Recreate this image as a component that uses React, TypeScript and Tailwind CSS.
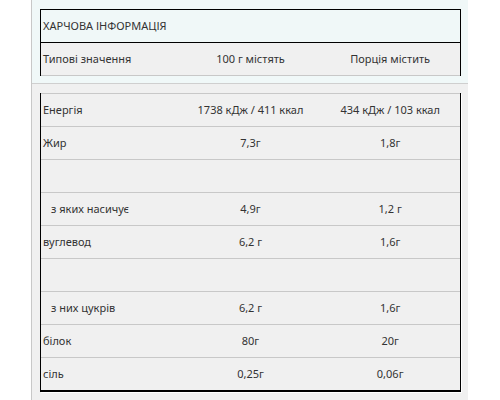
const rows = [
  { name: 'Енергія', per100: '1738 кДж / 411 ккал', portion: '434 кДж / 103 ккал' },
  { name: 'Жир', per100: '7,3г', portion: '1,8г' },
  { name: '', per100: '', portion: '' },
  { name: 'з яких насичує', per100: '4,9г', portion: '1,2 г', indent: true },
  { name: 'вуглевод', per100: '6,2 г', portion: '1,6г' },
  { name: '', per100: '', portion: '' },
  { name: 'з них цукрів', per100: '6,2 г', portion: '1,6г', indent: true },
  { name: 'білок', per100: '80г', portion: '20г' },
  { name: 'сіль', per100: '0,25г', portion: '0,06г' },
]

export default function App() {
  return (
    <div className="h-[400px] w-[500px] overflow-hidden bg-white font-['Noto_Sans',sans-serif] text-[11px] text-[#333]">
      <div className="ml-[31px] h-full w-[437px] border-l border-[#c8c8c8]">
        <div className="h-[83px] bg-[#f0f8f8] pt-[9px] pl-[8px] pr-[7px]">
          <div className="border border-b-0 border-black">
            <div className="flex h-[33px] items-center border-b border-black px-[2px]">
              ХАРЧОВА ІНФОРМАЦІЯ
            </div>
            <div className="grid h-[33px] grid-cols-3 items-center border-b border-[#c8c8c8] bg-[#f0f0f0]">
              <div className="px-[2px]">Типові значення</div>
              <div className="text-center">100 г містять</div>
              <div className="text-center">Порція містить</div>
            </div>
          </div>
        </div>
        <div className="h-[317px] border-t border-[#cfcfcf] bg-[#f0f0f0] pt-[9px] pl-[8px] pr-[7px]">
          <div className="border-x border-b-2 border-t-0 border-black shadow-[1px_1px_0_#fff]">
            {rows.map((r, i) => (
              <div
                key={i}
                className="grid h-[33px] grid-cols-3 items-center border-t border-[#c8c8c8]"
              >
                <div className={r.indent ? 'pl-[10px]' : 'px-[2px]'}>{r.name}</div>
                <div className="text-center">{r.per100}</div>
                <div className="text-center">{r.portion}</div>
              </div>
            ))}
          </div>
        </div>
      </div>
    </div>
  )
}
